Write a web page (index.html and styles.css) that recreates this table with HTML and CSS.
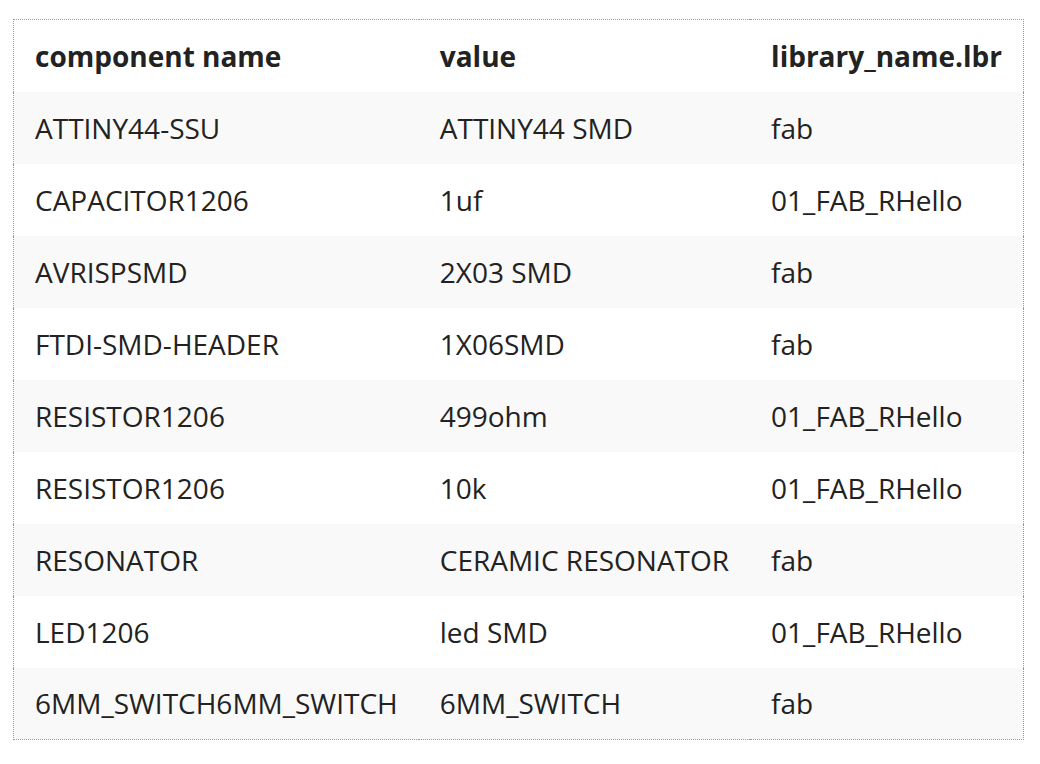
FILE: index.html
```html
<!DOCTYPE html>
<html>
<head>
<meta charset="utf-8">
<link rel="stylesheet" href="styles.css">
</head>
<body>
<table class="parts">
  <thead>
    <tr><th>component name</th><th>value</th><th>library_name.lbr</th></tr>
  </thead>
  <tbody>
    <tr><td>ATTINY44-SSU</td><td>ATTINY44 SMD</td><td>fab</td></tr>
    <tr><td>CAPACITOR1206</td><td>1uf</td><td>01_FAB_RHello</td></tr>
    <tr><td>AVRISPSMD</td><td>2X03 SMD</td><td>fab</td></tr>
    <tr><td>FTDI-SMD-HEADER</td><td>1X06SMD</td><td>fab</td></tr>
    <tr><td>RESISTOR1206</td><td>499ohm</td><td>01_FAB_RHello</td></tr>
    <tr><td>RESISTOR1206</td><td>10k</td><td>01_FAB_RHello</td></tr>
    <tr><td>RESONATOR</td><td>CERAMIC RESONATOR</td><td>fab</td></tr>
    <tr><td>LED1206</td><td>led SMD</td><td>01_FAB_RHello</td></tr>
    <tr><td>6MM_SWITCH6MM_SWITCH</td><td>6MM_SWITCH</td><td>fab</td></tr>
  </tbody>
</table>
</body>
</html>
```
FILE: styles.css
```css
html, body {
  margin: 0;
  padding: 0;
  background: #fff;
}
body {
  padding: 19px 0 0 13px;
  font-family: "Open Sans", "Liberation Sans", sans-serif;
  color: #222;
}
.parts {
  border-collapse: collapse;
  border: 1px dotted #999;
  font-size: 28px;
}
.parts th, .parts td {
  height: 72px;
  padding: 0 21px;
  text-align: left;
  vertical-align: middle;
  white-space: nowrap;
  box-sizing: border-box;
}
.parts th {
  font-weight: 700;
}
.parts td {
  font-weight: 400;
}
.parts tbody tr:nth-child(odd) {
  background: #f9f9f9;
}
```
